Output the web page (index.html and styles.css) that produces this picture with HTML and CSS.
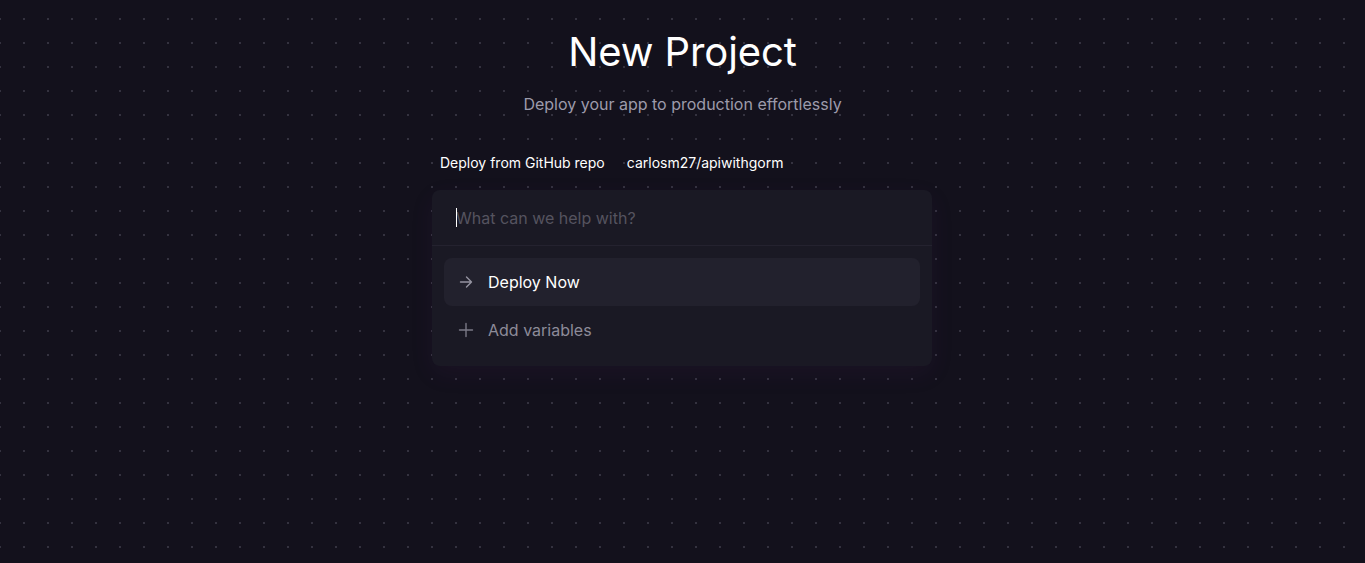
FILE: index.html
```html
<html>
	<head>
		<meta charset="utf-8" />
		<title>New Project</title>
		<link rel="stylesheet" href="styles.css">
	</head>
	<body>
		<div class="page">
			<h1 class="title">New Project</h1>
			<p class="subtitle">Deploy your app to production effortlessly</p>
			<div class="crumbs">
				<span>Deploy from GitHub repo</span>
				<span>carlosm27/apiwithgorm</span>
			</div>
			<div class="card">
				<div class="search">
					<span class="caret"></span>
					<input class="search-input" type="text" placeholder="What can we help with?">
				</div>
				<div class="options">
					<div class="option active">
						<svg width="16" height="16" viewBox="0 0 16 16" fill="none" stroke="currentColor" stroke-width="1.4" stroke-linecap="round" stroke-linejoin="round"><path d="M2.5 8h11M8.5 3l5 5-5 5"/></svg>
						<span>Deploy Now</span>
					</div>
					<div class="option">
						<svg width="16" height="16" viewBox="0 0 16 16" fill="none" stroke="currentColor" stroke-width="1.4" stroke-linecap="round"><path d="M8 1.5v13M1.5 8h13"/></svg>
						<span>Add variables</span>
					</div>
				</div>
			</div>
		</div>
	</body>
</html>
```
FILE: styles.css
```css
html, body { margin: 0; height: 100%; }
body {
	background-color: #13111c;
	background-image: radial-gradient(circle at 1px 1px, #34323f 1px, transparent 1px);
	background-size: 24px 24px;
	background-position: -1px 18px;
	font-family: Inter, "Noto Sans", sans-serif;
	color: #ffffff;
}
.page { display: flex; flex-direction: column; align-items: center; padding-top: 28px; }
.title { margin: 0; font-size: 40px; font-weight: 400; line-height: 48px; letter-spacing: -0.1px; }
.subtitle { margin: 16px 0 0; font-size: 16px; line-height: 24px; color: #9d9bab; }
.crumbs { width: 484px; display: flex; gap: 22px; margin: 37px 1px 0 0; font-size: 14px; line-height: 20px; color: #ffffff; }
.card {
	width: 500px;
	margin: 17px 1px 0 0;
	background-color: #1a1924;
	border-radius: 8px;
	box-shadow: 0 8px 24px rgba(120, 40, 140, 0.08);
}
.search { position: relative; height: 55px; display: flex; align-items: center; padding: 0 24px; border-bottom: 1px solid #24222f; }
.caret { position: absolute; left: 24px; top: 18px; width: 1px; height: 19px; background: #ffffff; }
.search-input {
	flex: 1;
	background: transparent;
	border: none;
	outline: none;
	padding: 0;
	font-family: inherit;
	font-size: 16px;
	color: #ffffff;
	caret-color: transparent;
}
.search-input::placeholder { color: #55535f; }
.options { padding: 12px; display: flex; flex-direction: column; }
.option { height: 48px; display: flex; align-items: center; gap: 14px; padding: 0 14px; border-radius: 8px; font-size: 16px; color: #8d8b99; }
.option svg { color: #7b7987; }
.option.active { background-color: #22212d; color: #ffffff; }
.option.active svg { color: #9593a1; }
```
